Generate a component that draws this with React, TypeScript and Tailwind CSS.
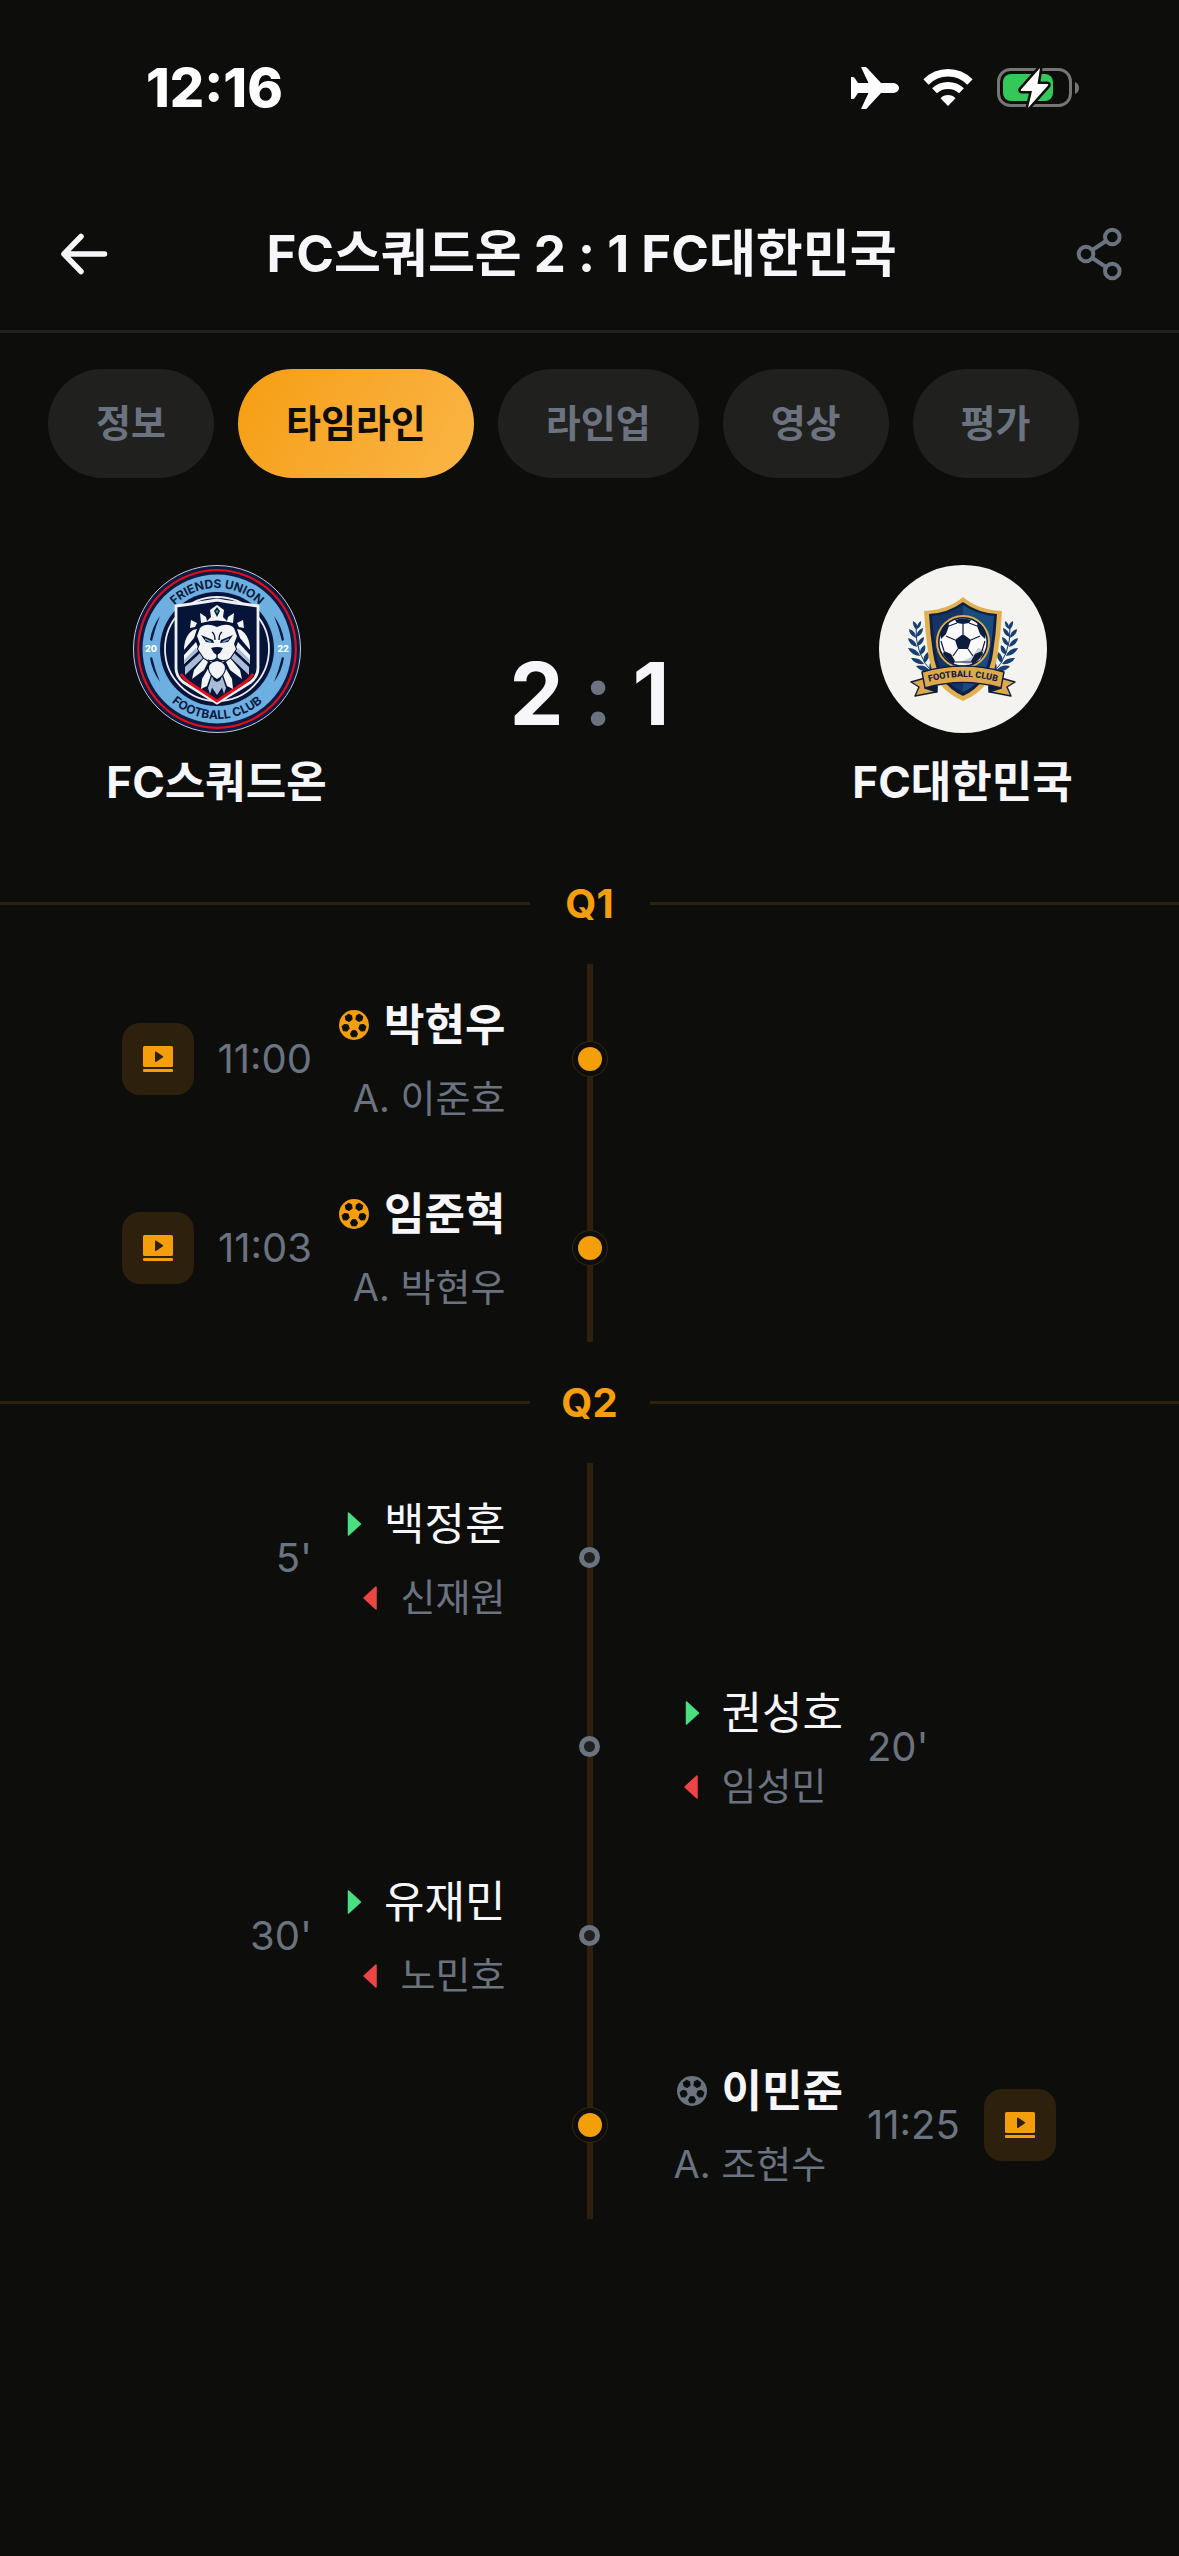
import { useState } from 'react';

type EventType = 'goal' | 'sub';
type Side = 'home' | 'away';

interface MatchEvent {
  id: number;
  type: EventType;
  side: Side;
  time: string;
  player: string;
  related: string;
}

interface Quarter {
  label: string;
  events: MatchEvent[];
}

const TABS = ['정보', '타임라인', '라인업', '영상', '평가'];

const QUARTERS: Quarter[] = [
  {
    label: 'Q1',
    events: [
      { id: 1, type: 'goal', side: 'home', time: '11:00', player: '박현우', related: '이준호' },
      { id: 2, type: 'goal', side: 'home', time: '11:03', player: '임준혁', related: '박현우' },
    ],
  },
  {
    label: 'Q2',
    events: [
      { id: 3, type: 'sub', side: 'home', time: "5'", player: '백정훈', related: '신재원' },
      { id: 4, type: 'sub', side: 'away', time: "20'", player: '권성호', related: '임성민' },
      { id: 5, type: 'sub', side: 'home', time: "30'", player: '유재민', related: '노민호' },
      { id: 6, type: 'goal', side: 'away', time: '11:25', player: '이민준', related: '조현수' },
    ],
  },
];

function StatusBar() {
  return (
    <div className="flex h-[177px] items-center justify-between pr-[100px] pb-0.5 pl-[146px]">
      <span className="text-[54px] leading-none font-extrabold text-white">12:16</span>
      <div className="flex items-center gap-6">
        <svg width="48" height="42" viewBox="0 0 48 42" fill="#fff" aria-hidden="true">
          <path d="M10 0h4c1 0 2 .6 2.6 1.6L30 16h11c4 0 7 2 7 5s-3 5-7 5H30L16.600 40.400C16 41.400 15 42 14 42h-4l7.500-16H7l-3 4.500C3.500 31.500 2.500 32 1.500 32H0V10h1.500c1 0 2 .5 2.500 1.500L7 16h10.500z" />
        </svg>
        <svg width="50" height="37" viewBox="0 0 50 37" fill="none" aria-hidden="true">
          <path d="M3 13C15.500.7 34.500.7 47 13" stroke="#fff" strokeWidth="7.500" />
          <path d="M11.500 21.800c7.500-7 19.500-7 27 0" stroke="#fff" strokeWidth="7" />
          <path d="M25 37l-7.500-7.700c4-4.300 11-4.300 15 0z" fill="#fff" />
        </svg>
        <svg width="82" height="42" viewBox="0 0 82 42" fill="none" aria-hidden="true">
          <rect x="1.500" y="2.500" width="72" height="36" rx="12" stroke="#767676" strokeWidth="3" />
          <path d="M78 15c2.500 1 4 3.300 4 6s-1.500 5-4 6z" fill="#767676" />
          <rect x="6" y="7" width="50" height="27" rx="8" fill="#34c759" />
          <path
            d="M43 1L24 22.500c-.6.8 0 1.500.8 1.500H35l-4 17L51 18.500c.6-.8.200-1.500-.6-1.500H40.500z"
            fill="#fff"
            stroke="#0d0e0c"
            strokeWidth="5"
            strokeLinejoin="round"
            paintOrder="stroke"
          />
        </svg>
      </div>
    </div>
  );
}

function Header() {
  return (
    <header className="flex h-[156px] items-center border-b-[3px] border-[#20211f] px-12">
      <button type="button" aria-label="뒤로" className="shrink-0">
        <svg width="72" height="72" viewBox="0 0 72 72" fill="none" stroke="#f7f7fb" strokeWidth="5.500" strokeLinecap="round" strokeLinejoin="round">
          <path d="M33 18.500L16 36l17 17.500M16 36h40.500" />
        </svg>
      </button>
      <h1 className="flex-1 text-center text-[51px] leading-[75px] font-bold whitespace-nowrap">
        FC스쿼드온 2 : 1 FC대한민국
      </h1>
      <button type="button" aria-label="공유" className="flex w-[88px] shrink-0 justify-end">
        <svg width="72" height="72" viewBox="0 0 72 72" fill="none" stroke="#6b7280" strokeWidth="4">
          <circle cx="27" cy="36" r="7.300" />
          <circle cx="53.300" cy="19" r="7.300" />
          <circle cx="53.300" cy="53" r="7.300" />
          <path d="M33.300 32l13.700-9M33.300 40l13.700 9" />
        </svg>
      </button>
    </header>
  );
}

function BallIcon({ className }: { className: string }) {
  return (
    <svg width="36" height="36" viewBox="-18 -18 36 36" className={className} aria-hidden="true">
      <circle r="15" fill="currentColor" />
      <g fill="#0d0e0c" stroke="#0d0e0c" strokeWidth="1" strokeLinejoin="round">
        {[36, 108, 180, 252, 324].map((angle) => (
          <path key={angle} transform={`rotate(${angle})`} d="M-3.500-8.800L-2.200-11.800h4.400L3.500-8.800 1.800-5.700h-3.600z" />
        ))}
      </g>
    </svg>
  );
}

function HomeCrest() {
  const mane = (
    <>
      <path d="M51 85c0-9 3-16 9-20l4-1-3 9z" fill="#f3f4f6" />
      <path d="M51 99V90l12-13 3 8z" fill="#f3f4f6" />
      <path d="M52 110v-8l15-14 3 5z" fill="#a9bdd6" />
      <path d="M59 114l2-9 10-12 4 4-4 8z" fill="#f3f4f6" />
      <path d="M68 124l1-10 7-12 3 5-5 14z" fill="#f3f4f6" />
      <path d="M77 129l-2-6 4-12 2 5z" fill="#a9bdd6" />
      <path d="M51 99V95l12-12 2 3z" fill="#a9bdd6" />
      <path d="M58 55l6 3-2 4-5 1z" fill="#f3f4f6" />
    </>
  );
  return (
    <svg width="168" height="168" viewBox="0 0 168 168" role="img" aria-label="FC스쿼드온">
      <defs>
        <path id="home-top" d="M23 84a61 61 0 0 1 122 0" />
        <path id="home-bottom" d="M14 84a70 70 0 0 0 140 0" />
      </defs>
      <circle cx="84" cy="84" r="83.500" fill="#0a1a42" stroke="#c8ccd6" />
      <circle cx="84" cy="84" r="78.800" fill="none" stroke="#e30d18" strokeWidth="2.200" />
      <circle cx="84" cy="84" r="74.500" fill="#6cafe0" />
      <circle cx="84" cy="84" r="57" fill="#061439" />
      <circle cx="84" cy="84" r="52" fill="none" stroke="#e9ecf2" strokeWidth="1.800" />
      <g fill="#0a1a42" fontFamily="Inter, sans-serif" fontSize="12" fontWeight="700" textAnchor="middle">
        <text>
          <textPath href="#home-top" startOffset="50%">FRIENDS UNION</textPath>
        </text>
        <text>
          <textPath href="#home-bottom" startOffset="50%">FOOTBALL CLUB</textPath>
        </text>
      </g>
      <g fill="#fff" fontFamily="Inter, sans-serif" fontSize="9" fontWeight="800" textAnchor="middle">
        <text x="18" y="87">20</text>
        <text x="150" y="87">22</text>
      </g>
      <path d="M27 51q-8 11-10 24l2 1q3-13 8-25zM27 117q-8-11-10-24l2-1q3 13 8 25zM141 51q8 11 10 24l-2 1q-3-13-8-25zM141 117q8-11 10-24l-2-1q-3 13-8 25z" fill="#0a1a42" />
      <path d="M43 41Q66 38 84 35q18 3 41 6v62q0 8-7 14l-34 21-34-21q-7-6-7-14z" fill="#061439" stroke="#eef0f4" strokeWidth="2.800" />
      <path d="M48 109q3 5 9 9l27 18 27-18q6-4 9-9" fill="none" stroke="#e30d18" strokeWidth="3" />
      <path d="M67 48l6 4 1 4 4-4-1-7 7-5 7 5-1 7 4 4 1-4 6-4-1 10q-16-5-32 0z" fill="#f3f4f6" />
      <path d="M84 42l3 4-3 6-3-6z" fill="#0a1a42" />
      <circle cx="84" cy="46.500" r="1.300" fill="#2fae62" />
      {mane}
      <g transform="matrix(-1 0 0 1 168 0)">{mane}</g>
      <path
        d="M84 62q11-5 17 1l3 8-3 8 2 5-6 9-7 4-6-3-6 3-7-4-6-9 2-5-3-8 3-8q6-6 17-1z"
        fill="#f3f4f6"
        stroke="#061439"
        strokeWidth="2"
        paintOrder="stroke"
      />
      <path d="M68 70l12 5 1 3-8-1zM100 70l-12 5-1 3 8-1zM78 83q6-2 12 0l-3 5-3 2-3-2z" fill="#061439" />
      <path d="M84 89v5M75 95q6 2 9-2 3 4 9 2M79 67q3 2 3 8M89 67q-3 2-3 8" fill="none" stroke="#061439" strokeWidth="1.300" />
      <path d="M72 74l6 3M96 74l-6 3" stroke="#7796bd" strokeWidth="1.500" />
      <path d="M84 96q9 2 8 8-1 6-8 10-7-4-8-10-1-6 8-8z" fill="#f3f4f6" stroke="#061439" strokeWidth="2" paintOrder="stroke" />
      <path d="M80 115l4 2 4-2 2 6-6 9-6-9z" fill="#a9bdd6" />
    </svg>
  );
}

function AwayCrest() {
  const laurel = (
    <g fill="#173f70">
      <path d="M54 108Q36 90 37 62" fill="none" stroke="#173f70" strokeWidth="1" />
      <path d="M38 65q-5-4-4-9 6 3 4 9zM38 64q0-6 4-8 1 5-4 8z" />
      <path d="M37 73q-7-3-7-9 7 2 7 9zM37 72q1-7 7-9 0 7-7 9z" />
      <path d="M38 82q-8-2-9-9 8 2 9 9zM38 81q1-7 7-9 0 7-7 9z" />
      <path d="M41 91q-9-1-12-8 9 0 12 8zM41 90q-1-7 5-10 2 7-5 10z" />
      <path d="M45 99q-9 1-13-6 9-1 13 6zM45 98q-2-7 4-11 3 7-4 11z" />
      <path d="M51 106q-9 2-14-5 9-2 14 5zM51 106q-2-7 2-11 4 6-2 11z" />
    </g>
  );
  return (
    <svg width="168" height="168" viewBox="0 0 168 168" role="img" aria-label="FC대한민국">
      <defs>
        <path id="away-banner" d="M46 118q38-12 76 0" />
      </defs>
      <circle cx="84" cy="84" r="84" fill="#f4f3f0" />
      {laurel}
      <g transform="matrix(-1 0 0 1 168 0)">{laurel}</g>
      <path d="M84 32q15 13 39 14-1 20-4 41-4 36-35 49-31-13-35-49-3-21-4-41 24-1 39-14z" fill="#e2b04e" />
      <path d="M84 37q15 11 34 12-1 20-4 39-4 31-30 43-26-12-30-43-3-19-4-39 19-1 34-12z" fill="#0d2147" />
      <path d="M84 40q13 9 31 11-1 18-4 36-4 30-27 40z" fill="#1b4c80" />
      <path d="M84 40q-13 9-31 11 1 18 4 36 4 30 27 40z" fill="#163463" />
      <circle cx="84" cy="77" r="26" fill="#0d1d3f" stroke="#dcae55" strokeWidth="2" />
      <circle cx="84" cy="77" r="23.500" fill="#fafafa" />
      <path d="M99 83l7 2-5 10-12 5-8-3 12-5z" fill="#c9ced6" />
      <g fill="#0d1d3f">
        <path d="M84 69l8 6-3 9H79l-3-9z" />
        <path d="M76 55q8-3 16 0l-2 3-6 1-6-1zM61 69q2-8 8-12l1 4-3 8-5 5zM107 69q-2-8-8-12l-1 4 3 8 5 5zM64 89q4 7 11 10l1-3-4-7-7-3zM104 89q-4 7-11 10l-1-3 4-7 7-3z" />
      </g>
      <path d="M84 59v10M92 75l9-4M89 84l5 7M79 84l-5 7M76 75l-9-4M65 86l-3-10M103 86l3-10M76 97h16M70 61l8-3M98 61l-8-3" stroke="#0d1d3f" strokeWidth="1.200" />
      <g stroke="#0d1d3f" strokeWidth="1.400" strokeLinejoin="round">
        <path d="M46 113l-14 4 8 5-4 9 21-4 1-5zM122 113l14 4-8 5 4 9-21-4-1-5z" fill="#dfa84a" />
        <path d="M46 123l12 4v-6zM122 123l-12 4v-6z" fill="#0d1d3f" />
        <path d="M43 107q41-12 82 0l-3 16q-38-11-76 0z" fill="#dfa84a" />
      </g>
      <text fill="#0d1d3f" fontFamily="Roboto, sans-serif" fontSize="9" fontWeight="800" textAnchor="middle">
        <textPath href="#away-banner" startOffset="50%">FOOTBALL CLUB</textPath>
      </text>
    </svg>
  );
}

function PlayerLine({ event }: { event: MatchEvent }) {
  const isGoal = event.type === 'goal';
  return (
    <div className="flex items-center gap-3">
      {isGoal ? (
        <BallIcon className={event.side === 'home' ? 'text-[#f59e0b]' : 'text-[#6b7280]'} />
      ) : (
        <svg width="36" height="36" viewBox="0 0 36 36" aria-hidden="true">
          <path d="M12.500 7l12 11-12 11z" fill="#4ade80" stroke="#4ade80" strokeWidth="1.500" strokeLinejoin="round" />
        </svg>
      )}
      <span className={`text-[44px] leading-[66px] ${isGoal ? 'font-bold' : 'font-normal'}`}>{event.player}</span>
    </div>
  );
}

function RelatedLine({ event }: { event: MatchEvent }) {
  if (event.type === 'goal') {
    return <p className="text-[38px] leading-[57px] text-[#6b7280]">A. {event.related}</p>;
  }
  return (
    <div className="flex items-center gap-3">
      <svg width="36" height="36" viewBox="0 0 36 36" aria-hidden="true">
        <path d="M23 7L11 18l12 11z" fill="#ef4444" stroke="#ef4444" strokeWidth="1.500" strokeLinejoin="round" />
      </svg>
      <span className="text-[38px] leading-[57px] text-[#6b7280]">{event.related}</span>
    </div>
  );
}

function EventDetail({ event }: { event: MatchEvent }) {
  const isHome = event.side === 'home';
  return (
    <div className={`flex items-center gap-6 ${isHome ? 'flex-row-reverse' : ''}`}>
      <div className={`flex flex-col gap-3 pt-0.5 ${isHome ? 'items-end' : 'items-start'}`}>
        <PlayerLine event={event} />
        <RelatedLine event={event} />
      </div>
      <span className="text-[40px] leading-[60px] text-[#6b7280]">{event.time}</span>
      {event.type === 'goal' && (
        <button
          type="button"
          aria-label={`${event.time} 영상 보기`}
          className="flex size-[72px] items-center justify-center rounded-[18px] bg-[#2d200c]"
        >
          <svg width="30" height="26" viewBox="0 0 30 26" fill="#f59e0b">
            <path fillRule="evenodd" d="M1.500 0h27A1.500 1.500 0 0 1 30 1.500v18a1.500 1.500 0 0 1-1.500 1.500h-27A1.500 1.500 0 0 1 0 19.500v-18A1.500 1.500 0 0 1 1.500 0zM12 6v9.500c0 .5.500.8 1 .5l7-4.700c.4-.3.400-.8 0-1.100L13 5.500c-.5-.3-1 0-1 .5z" />
            <rect y="23" width="30" height="3" rx="1" />
          </svg>
        </button>
      )}
    </div>
  );
}

function EventRow({ event }: { event: MatchEvent }) {
  return (
    <li className="flex items-stretch">
      <div className="flex flex-1 justify-end py-[26px]">
        {event.side === 'home' && <EventDetail event={event} />}
      </div>
      <div className="relative flex w-[168px] items-center justify-center">
        <div className="h-full w-1.5 bg-[#2d200c]" />
        <div className="absolute inset-0 flex items-center justify-center">
          {event.type === 'goal' ? (
            <div className="flex size-9 items-center justify-center rounded-full border border-[#3d250c] bg-[#0d0e0c]">
              <div className="size-6 rounded-full bg-[#f59e0b]" />
            </div>
          ) : (
            <div className="size-[21px] rounded-full border-[5px] border-[#6b7280] bg-[#20211f]" />
          )}
        </div>
      </div>
      <div className="flex flex-1 py-[26px]">
        {event.side === 'away' && <EventDetail event={event} />}
      </div>
    </li>
  );
}

export default function App() {
  const [activeTab, setActiveTab] = useState('타임라인');

  return (
    <div className="min-h-screen bg-[#0d0e0c] font-[Inter,'Noto_Sans_CJK_KR',sans-serif] text-[#f7f7fb]">
      <StatusBar />
      <Header />

      <nav className="flex gap-6 px-12 pt-9">
        {TABS.map((tab) => (
          <button
            key={tab}
            type="button"
            onClick={() => setActiveTab(tab)}
            className={`rounded-full px-12 py-[26px] text-[38px] leading-[57px] font-bold whitespace-nowrap ${
              activeTab === tab
                ? 'bg-linear-120 from-[#f59e0b] to-[#fbb544] text-[#0d0e0c]'
                : 'bg-[#20211f] text-[#6b7280]'
            }`}
          >
            {tab}
          </button>
        ))}
      </nav>

      <section className="flex items-center px-[30px] pt-[87px] pb-7">
        <div className="flex flex-1 flex-col items-center gap-4">
          <HomeCrest />
          <p className="text-[44px] leading-[66px] font-bold">FC스쿼드온</p>
        </div>
        <div className="flex flex-1 items-center justify-center gap-5 pt-2 text-[86px] leading-none font-bold">
          <span>2</span>
          <span className="text-[#6b7280]">:</span>
          <span>1</span>
        </div>
        <div className="flex flex-1 flex-col items-center gap-4">
          <AwayCrest />
          <p className="text-[44px] leading-[66px] font-bold">FC대한민국</p>
        </div>
      </section>

      {QUARTERS.map((quarter) => (
        <section key={quarter.label}>
          <div className="flex items-center py-9">
            <div className="h-[3px] flex-1 bg-[#2d200c]" />
            <h2 className="w-[120px] text-center text-[40px] leading-[49px] font-bold text-[#f59e0b]">
              {quarter.label}
            </h2>
            <div className="h-[3px] flex-1 bg-[#2d200c]" />
          </div>
          <ol>
            {quarter.events.map((event) => (
              <EventRow key={event.id} event={event} />
            ))}
          </ol>
        </section>
      ))}
    </div>
  );
}
